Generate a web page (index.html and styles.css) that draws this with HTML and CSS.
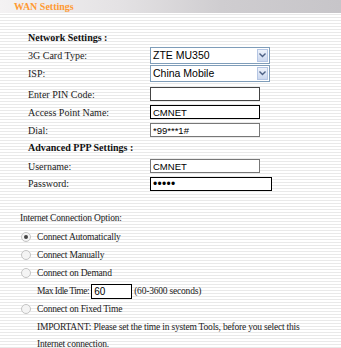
FILE: index.html
```html
<!DOCTYPE html>
<html lang="en">
<head>
    <meta charset="UTF-8">
    <meta name="viewport" content="width=device-width, initial-scale=1.0">
    <title>WAN Settings</title>
    <link rel="stylesheet" href="styles.css">
</head>
<body>
    <div class="titlebar">
        <span class="title">WAN Settings</span>
    </div>

    <div class="section">
        <div class="heading">Network Settings :</div>

        <div class="row">
            <span class="label">3G Card Type:</span>
            <div class="select">
                <span class="select-value">ZTE MU350</span>
                <span class="select-btn">
                    <svg width="7" height="5" viewBox="0 0 7 5"><path d="M0.5 0.5 L3.5 3.5 L6.5 0.5" fill="none" stroke="#4d6185" stroke-width="1.4"/></svg>
                </span>
            </div>
        </div>

        <div class="row last-select">
            <span class="label">ISP:</span>
            <div class="select">
                <span class="select-value">China Mobile</span>
                <span class="select-btn">
                    <svg width="7" height="5" viewBox="0 0 7 5"><path d="M0.5 0.5 L3.5 3.5 L6.5 0.5" fill="none" stroke="#4d6185" stroke-width="1.4"/></svg>
                </span>
            </div>
        </div>

        <div class="row">
            <span class="label">Enter PIN Code:</span>
            <input class="text pin" type="text" value="">
        </div>

        <div class="row">
            <span class="label">Access Point Name:</span>
            <input class="text dark" type="text" value="CMNET">
        </div>

        <div class="row">
            <span class="label">Dial:</span>
            <input class="text" type="text" value="*99***1#">
        </div>

        <div class="heading sub">Advanced PPP Settings :</div>

        <div class="row">
            <span class="label">Username:</span>
            <input class="text" type="text" value="CMNET">
        </div>

        <div class="row short">
            <span class="label">Password:</span>
            <input class="text dark wide" type="password" value="12345">
        </div>
    </div>

    <div class="options">
        <div class="opt-title">Internet Connection Option:</div>

        <label class="radio-line"><span class="radio checked"></span>Connect Automatically</label>
        <label class="radio-line"><span class="radio"></span>Connect Manually</label>
        <label class="radio-line"><span class="radio"></span>Connect on Demand</label>

        <div class="idle">
            <span class="idle-label">Max Idle Time:</span>
            <input class="text idle-input" type="text" value="60">
            <span>(60-3600 seconds)</span>
        </div>

        <label class="radio-line"><span class="radio"></span>Connect on Fixed Time</label>

        <div class="note">
            IMPORTANT: Please set the time in system Tools, before you select this<br>
            Internet connection.
        </div>
    </div>
</body>
</html>
```

FILE: styles.css
```css
body {
    margin: 0;
    font-family: 'Liberation Serif', 'Times New Roman', serif;
    font-size: 10px;
    color: #222;
    background: repeating-linear-gradient(to bottom, #ffffff 0, #ffffff 2px, #e9e9e9 2px, #e9e9e9 3px);
    height: 348px;
    overflow: hidden;
}

.titlebar {
    height: 13px;
    background: linear-gradient(to right, #f4f2f3 0%, #e4e2e4 35%, #cfcdd0 65%, #c7c5c9 100%);
    padding-left: 14px;
    line-height: 13px;
}

.title {
    color: #ff9a33;
    font-weight: bold;
    font-size: 10px;
}

.section {
    padding: 17px 0 0 28px;
}

.heading {
    font-weight: bold;
    height: 16px;
    line-height: 16px;
    color: #111;
}

.heading.sub {
    height: 18px;
    line-height: 18px;
}

.row {
    display: flex;
    align-items: center;
    height: 18px;
}

.row.last-select {
    margin-bottom: 3px;
}

.row.short {
    height: 17px;
}

.label {
    width: 122px;
    flex: none;
}

.select {
    display: flex;
    width: 118px;
    height: 15px;
    border: 1px solid #7f9db9;
    background: #fff;
    font-family: 'Liberation Sans', Arial, sans-serif;
    font-size: 10.5px;
    color: #000;
}

.select-value {
    flex: 1;
    padding-left: 2px;
    line-height: 15px;
}

.select-btn {
    width: 11px;
    margin: 1px;
    background: linear-gradient(to bottom, #eef3fb, #cbd7ee);
    border: 1px solid #b5c6e4;
    box-sizing: border-box;
    display: flex;
    align-items: center;
    justify-content: center;
}

.text {
    width: 110px;
    height: 14px;
    box-sizing: border-box;
    border: 1px solid #777;
    padding: 0 2px;
    margin: 0;
    font-family: 'Liberation Sans', Arial, sans-serif;
    font-size: 9.5px;
    background: #fff;
    color: #000;
    outline: none;
}

.text.pin {
    border-color: #444;
}

.text.dark {
    border-color: #000;
}

.text.wide {
    width: 122px;
    font-size: 12px;
    letter-spacing: 0.3px;
}

.options {
    padding: 16px 0 0 20px;
    font-size: 9.5px;
    letter-spacing: -0.2px;
}

.opt-title {
    height: 20px;
    line-height: 20px;
}

.radio-line {
    display: flex;
    align-items: center;
    height: 18px;
    padding-left: 1px;
}

.radio {
    width: 8px;
    height: 8px;
    border-radius: 50%;
    border: 1px solid #c4c4c4;
    background: #f4f4f4;
    margin-right: 6px;
    position: relative;
}

.radio.checked::after {
    content: "";
    position: absolute;
    left: 2px;
    top: 2px;
    width: 4px;
    height: 4px;
    border-radius: 50%;
    background: #444;
}

.idle {
    display: flex;
    align-items: center;
    height: 18px;
    padding-left: 17px;
    gap: 2px;
}

.idle-label {
    letter-spacing: -0.5px;
}

.idle-input {
    width: 41px;
    height: 15px;
    border-color: #000;
    font-size: 10px;
    letter-spacing: 0;
}

.note {
    padding-left: 17px;
    padding-top: 1px;
    line-height: 17px;
}
```
